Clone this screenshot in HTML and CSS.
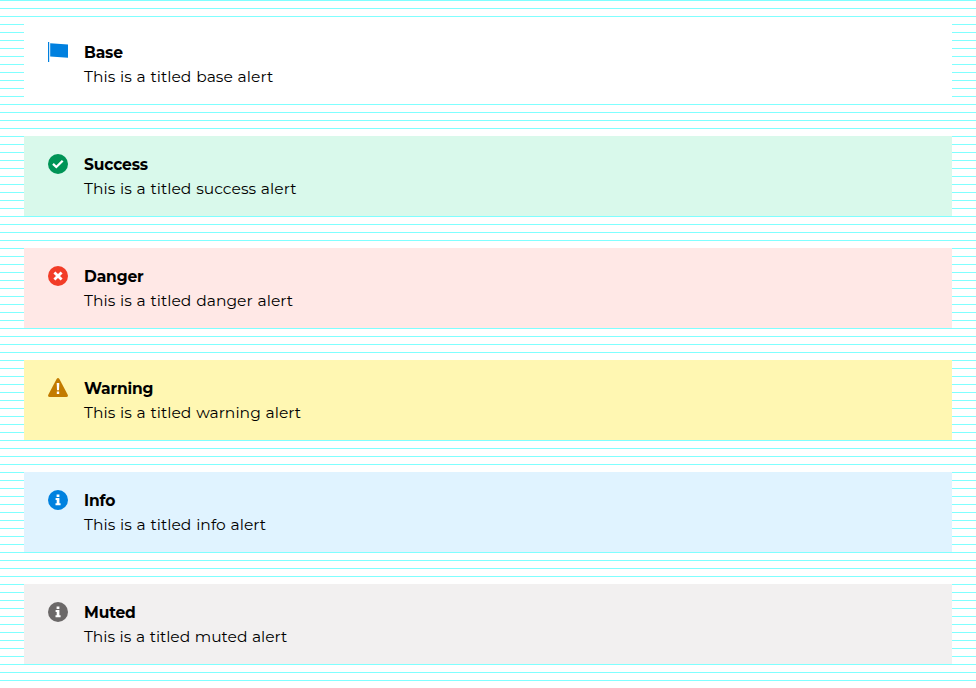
FILE: index.html
```html
<!DOCTYPE html>
<html lang="en">
<head>
<meta charset="utf-8">
<title>Alerts</title>
<link rel="stylesheet" href="styles.css">
</head>
<body>
<main class="stack">
  <section class="alert base">
    <svg class="icon" viewBox="0 0 20 20"><path d="M0 0h1.2v20H0zM2.2 1.2 20 2.6v13.1L2.2 14.5z"/></svg>
    <div class="body"><h2 class="title">Base</h2><p class="text">This is a titled base alert</p></div>
  </section>
  <section class="alert success">
    <svg class="icon" viewBox="0 0 20 20"><circle cx="10" cy="10" r="10"/><path class="check" d="m5 9.9 3.3 3.1 6.4-6.3"/></svg>
    <div class="body"><h2 class="title">Success</h2><p class="text">This is a titled success alert</p></div>
  </section>
  <section class="alert danger">
    <svg class="icon" viewBox="0 0 20 20"><circle cx="10" cy="10" r="10"/><path class="cross" d="m6.4 6.4 7.2 7.2m0-7.2-7.2 7.2"/></svg>
    <div class="body"><h2 class="title">Danger</h2><p class="text tight">This is a titled danger alert</p></div>
  </section>
  <section class="alert warning">
    <svg class="icon" viewBox="0 0 20 20"><path d="M8.6 1Q10-.9 11.4 1l8.3 15.8Q20.5 19 18.3 19H1.7Q-.5 19 .3 16.8z"/><path class="mark" d="M8.7 5h2.6l-.3 7.3H9zM8.8 13.6h2.4V16H8.8z"/></svg>
    <div class="body"><h2 class="title">Warning</h2><p class="text tight">This is a titled warning alert</p></div>
  </section>
  <section class="alert info">
    <svg class="icon" viewBox="0 0 20 20"><circle cx="10" cy="10" r="10"/><path class="mark" d="M8.6 4.4h2.8v2.7H8.6zM7.6 8.1h3.8v5.1h1.2v2H7.5v-2h1.2v-3.1H7.6z"/></svg>
    <div class="body"><h2 class="title">Info</h2><p class="text">This is a titled info alert</p></div>
  </section>
  <section class="alert muted">
    <svg class="icon" viewBox="0 0 20 20"><circle cx="10" cy="10" r="10"/><path class="mark" d="M8.6 4.4h2.8v2.7H8.6zM7.6 8.1h3.8v5.1h1.2v2H7.5v-2h1.2v-3.1H7.6z"/></svg>
    <div class="body"><h2 class="title">Muted</h2><p class="text muted-text">This is a titled muted alert</p></div>
  </section>
</main>
</body>
</html>
```
FILE: styles.css
```css
body {
  margin: 0;
  background: #fff repeating-linear-gradient(to bottom, #80ffff 0 1px, #fff 1px 8px);
  font: 400 16px/24px Gotham, Montserrat, Inter, sans-serif;
  color: #000;
}
.stack { display: flex; flex-direction: column; gap: 32px; padding: 24px; }
.alert { display: flex; gap: 16px; height: 48px; padding: 16px 24px; }
.icon { flex: none; width: 20px; height: 20px; margin-top: 2px; fill: currentColor; }
.body { padding-top: 1px; }
.title, .text { margin: 0; line-height: 24px; color: #000; }
.title { font-size: 15.5px; font-weight: 700; letter-spacing: -0.15px; }
.text { font-size: 15.5px; font-weight: 400; letter-spacing: 0.05px; word-spacing: 0.6px; }
.muted-text { letter-spacing: -0.03px; }
.check, .cross { fill: none; stroke: #fff; stroke-width: 2.3; }
.cross { stroke-width: 2.8; }
.mark { fill: #fff; }
.base { background: #fff; color: #0080df; }
.success { background: #d9f9eb; color: #009456; }
.danger { background: #ffe8e6; color: #f23c27; }
.warning { background: #fff7b2; color: #c27b00; }
.info { background: #e0f3ff; color: #0081df; }
.muted { background: #f2f0f0; color: #6b6868; }
```
